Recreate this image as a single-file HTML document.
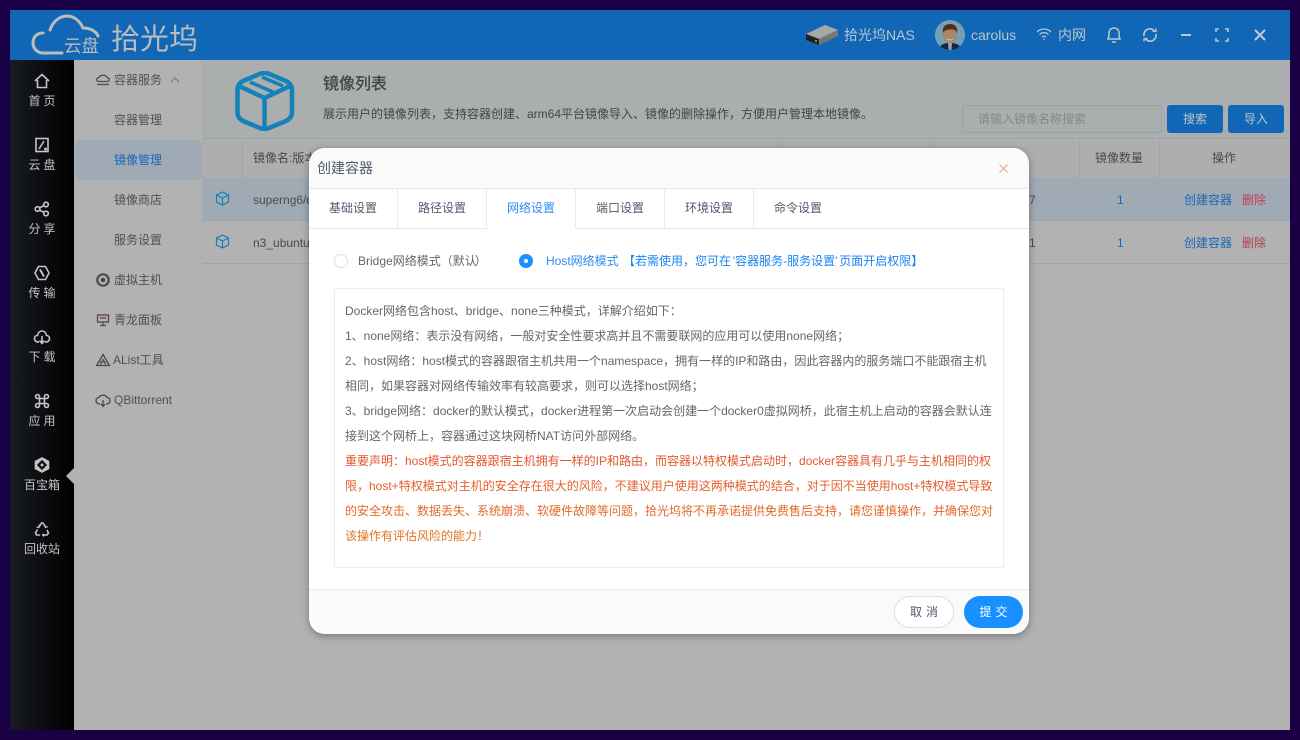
<!DOCTYPE html>
<html lang="zh">
<head>
<meta charset="utf-8">
<title>拾光坞</title>
<style>
*{box-sizing:border-box}
html,body{margin:0;padding:0;width:1300px;height:740px;overflow:hidden;background:#1a0045;font-family:"Liberation Sans","Noto Sans CJK SC",sans-serif;font-size:12px;color:#4a4a4a}
.a{position:absolute}
#top{position:absolute;left:10px;top:10px;width:1280px;height:50px;background:#1167b5}
#side{position:absolute;left:10px;top:60px;width:64px;height:670px;background:linear-gradient(90deg,#181b21,#000)}
.nav{position:absolute;left:10px;width:64px;text-align:center;color:#c4c4c4;font-size:12px;line-height:16px}
.nav svg{position:absolute;left:23px;top:-1px;width:18px;height:18px;fill:none;stroke:#c4c4c4;stroke-width:1.6}
.nav span{position:absolute;left:0;right:0;top:20px}
.nav span.s{letter-spacing:3px;padding-left:3px}
#sub{position:absolute;left:74px;top:60px;width:129px;height:670px;background:#b2b2b2;border-right:1px solid #a8acae}
.m{position:absolute;font-size:12px;color:#505050;line-height:16px;white-space:nowrap}
.m svg{position:absolute;left:-19px;top:0;width:16px;height:16px;fill:none;stroke:#4a4a4a;stroke-width:1.3}
#act{position:absolute;left:75px;top:140px;width:127px;height:40px;background:#a0aab4;border-radius:6px}
#cont{position:absolute;left:203px;top:60px;width:1087px;height:670px;background:#b2b2b2}
#hd{position:absolute;left:0;top:0;width:1087px;height:79px;background:#aaaeae;border-bottom:1px solid #9fa3a8}
#th{position:absolute;left:0;top:80px;width:1087px;height:38px;background:#aeaeae}
.v{position:absolute;top:80px;width:1px;height:38px;background:#a2a4a6}
.r{position:absolute;left:0;width:1087px;height:43px;border-bottom:1px solid #a2a5a9}
.t{position:absolute;white-space:nowrap;line-height:16px;font-size:12px}
#dlg{position:absolute;left:309px;top:148px;width:720px;height:486px;background:#fff;border-radius:16px;box-shadow:0 2px 8px rgba(0,0,0,.35);overflow:hidden}
#dh{position:absolute;left:0;top:0;width:720px;height:41px;background:#fafafa;border-bottom:1px solid #e8eaf0}
.tab{position:absolute;top:41px;height:40px;border-right:1px solid #e8eaf0;border-bottom:1px solid #e8eaf0;text-align:center;line-height:38px;font-size:12px;color:#515a6e}
.line{position:absolute;left:36px;white-space:nowrap;line-height:25px;height:25px;font-size:12px;color:#666}
#box{position:absolute;left:25px;top:140px;width:670px;height:280px;border:1px solid #ececf2}
#df{position:absolute;left:0;top:441px;width:720px;height:45px;background:#fafafa;border-top:1px solid #e8eaf0}
</style>
</head>
<body>
<div id="top"></div>
<!-- logo -->
<svg class="a" style="left:30px;top:12px" width="75" height="46" viewBox="0 0 75 46" fill="none" stroke="#bcbcbc" stroke-width="3" stroke-linecap="round">
<path d="M13 21C6 21 3 26 3 31C3 37 8 41 13 41H32"/>
<path d="M20 18C23 9 30 4 37 4C44 4 50 9 53 16C60 16 66 19 68 24"/>
</svg>
<div class="t" style="left:64px;top:36px;font-size:17.500px;line-height:20px;color:#bcbcbc">云盘</div>
<div class="t" style="left:111px;top:23px;font-size:29px;line-height:34px;color:#bcbcbc">拾光坞</div>

<!-- NAS icon -->
<svg class="a" style="left:805px;top:24px" width="34" height="22" viewBox="0 0 34 22">
<path d="M1 10L14 15L33 6L20 1Z" fill="#a8a8a8"/><path d="M1 10L14 15V21L1 16Z" fill="#222"/><path d="M14 15L33 6V12L14 21Z" fill="#777"/><rect x="10" y="16" width="2" height="2" fill="#2c2"/>
</svg>
<div class="t" style="left:844px;top:27px;font-size:14px;color:#bcc5cc">拾光坞NAS</div>
<!-- avatar -->
<svg class="a" style="left:935px;top:20px" width="30" height="30" viewBox="0 0 30 30">
<defs><clipPath id="c"><circle cx="15" cy="15" r="15"/></clipPath></defs>
<g clip-path="url(#c)"><rect width="30" height="30" fill="#74a0b4"/><path d="M3 30C5 24 10 23 15 23C20 23 25 24 27 30Z" fill="#10264a"/><path d="M13 23H17L16.500 30H13.500Z" fill="#a0a0a0"/><ellipse cx="15" cy="14" rx="7" ry="9" fill="#a88668"/><path d="M8 13C7 7 10 4 15 4C20 4 23 7 22 13C21 10 19 9 15 9.500C12 9.500 10 10 8 13Z" fill="#552b14"/><path d="M11 18C13 20 17 20 19 18C18 21 12 21 11 18Z" fill="#d8d8d8"/></g>
</svg>
<div class="t" style="left:971px;top:27px;font-size:14px;color:#bcc5cc">carolus</div>
<!-- wifi -->
<svg class="a" style="left:1036px;top:27px" width="16" height="14" viewBox="0 0 16 14" fill="none" stroke="#bcc5cc" stroke-width="1.300">
<path d="M1 5C5 1 11 1 15 5M3.500 7.500C6 5 10 5 12.500 7.500M6 10C7 9 9 9 10 10"/><circle cx="8" cy="12.300" r=".8" fill="#bcc5cc" stroke="none"/>
</svg>
<div class="t" style="left:1058px;top:27px;font-size:14px;color:#bcc5cc">内网</div>
<!-- bell -->
<svg class="a" style="left:1106px;top:26px" width="16" height="18" viewBox="0 0 16 18" fill="none" stroke="#bcc5cc" stroke-width="1.500">
<path d="M2 13C3 11 3 10 3 7C3 4 5 2 8 2C11 2 13 4 13 7C13 10 13 11 14 13Z"/><path d="M6 15.500C7 16.500 9 16.500 10 15.500"/>
</svg>
<!-- refresh -->
<svg class="a" style="left:1142px;top:27px" width="16" height="16" viewBox="0 0 16 16" fill="none" stroke="#bcc5cc" stroke-width="1.700">
<path d="M2 9A6 6 0 0 1 12.500 4"/><path d="M14 7A6 6 0 0 1 3.500 12"/><path d="M10.500 4.500H14V1.500" stroke-width="1.300"/><path d="M5.500 11.500H2V14.500" stroke-width="1.300"/>
</svg>
<!-- min -->
<div class="a" style="left:1181px;top:34px;width:10px;height:2px;background:#bcc5cc"></div>
<!-- full -->
<svg class="a" style="left:1215px;top:28px" width="14" height="14" viewBox="0 0 14 14" fill="none" stroke="#bcc5cc" stroke-width="1.600">
<path d="M1 4V1H4M10 1H13V4M13 10V13H10M4 13H1V10"/>
</svg>
<!-- close -->
<svg class="a" style="left:1254px;top:29px" width="12" height="12" viewBox="0 0 12 12" fill="none" stroke="#c4ccd2" stroke-width="2">
<path d="M1 1L11 11M11 1L1 11"/>
</svg>

<div id="side"></div>
<div class="nav" style="top:73px"><svg viewBox="0 0 18 18"><path d="M2 9L9 2.500L16 9"/><path d="M4.500 8V15.500H13.500V8"/></svg><span class="s">首页</span></div>
<div class="nav" style="top:137px"><svg viewBox="0 0 18 18"><rect x="3" y="2.500" width="12" height="13"/><path d="M11 5L6 13"/><circle cx="12.500" cy="13" r=".7" fill="#c4c4c4"/></svg><span class="s">云盘</span></div>
<div class="nav" style="top:201px"><svg viewBox="0 0 18 18"><circle cx="4.500" cy="9" r="2.300"/><circle cx="13" cy="4.500" r="2.300"/><circle cx="13" cy="13.500" r="2.300"/><path d="M6.500 8L11 5.500M6.500 10L11 12.500"/></svg><span class="s">分享</span></div>
<div class="nav" style="top:265px"><svg viewBox="0 0 18 18"><path d="M5.500 2.500H12.500L16 9L12.500 15.500H5.500L2 9Z"/><path d="M7 5.500L11 12.500" stroke-width="2"/></svg><span class="s">传输</span></div>
<div class="nav" style="top:329px"><svg viewBox="0 0 18 18"><path d="M6 14H5C2.500 14 1.500 12 1.500 10.500C1.500 8.500 3 7.500 4.500 7.500C5 4.500 7 3 9 3C11 3 13 4.500 13.500 7.500C15 7.500 16.500 8.500 16.500 10.500C16.500 12 15.500 14 13 14H12"/><path d="M9 8V15M6.500 12.500L9 15.500L11.500 12.500"/></svg><span class="s">下载</span></div>
<div class="nav" style="top:393px"><svg viewBox="0 0 18 18"><rect x="6.500" y="6.500" width="5" height="5"/><path d="M6.500 6.500H4.500A2 2 0 1 1 6.500 4.500ZM11.500 6.500V4.500A2 2 0 1 1 13.500 6.500ZM11.500 11.500H13.500A2 2 0 1 1 11.500 13.500ZM6.500 11.500V13.500A2 2 0 1 1 4.500 11.500Z"/></svg><span class="s">应用</span></div>
<div class="nav" style="top:457px"><svg viewBox="0 0 18 18"><path d="M9 2L15.500 5.500V12.500L9 16L2.500 12.500V5.500Z" fill="#c4c4c4"/><path d="M9 5L13 9L9 13L5 9Z" stroke="#111" fill="#111"/><circle cx="9" cy="9" r="1.500" fill="#c4c4c4" stroke="none"/></svg><span>百宝箱</span></div>
<div class="nav" style="top:521px"><svg viewBox="0 0 18 18"><path d="M6 7L8.500 3H10L12.500 7M14 10L15.500 13L14 15H10.500M7 15H3.500L2.500 13L4.500 9.500"/><path d="M11 14L9.500 15L11 16.500M6.500 4.500L6 7.500L3.500 7M15 6.500L12.500 7.500L12 5" stroke-width="1.200"/></svg><span>回收站</span></div>

<div id="sub"></div>
<div id="act"></div>
<div class="m" style="left:114px;top:72px"><svg viewBox="0 0 16 16"><path d="M4 9.500C1 9.500 1 5.500 4 5.500C5 2.500 11 2.500 12 5.500C15 5.500 15 9.500 12 9.500Z"/><path d="M2 12.500H14"/></svg>容器服务<svg style="left:53px;top:0" viewBox="0 0 16 16"><path d="M4 10L8 6L12 10" stroke="#777" stroke-width="1"/></svg></div>
<div class="m" style="left:114px;top:112px">容器管理</div>
<div class="m" style="left:114px;top:152px;color:#1a66bd">镜像管理</div>
<div class="m" style="left:114px;top:192px">镜像商店</div>
<div class="m" style="left:114px;top:232px">服务设置</div>
<div class="m" style="left:114px;top:272px"><svg viewBox="0 0 16 16"><circle cx="8" cy="8" r="5.700" stroke-width="2.200"/><circle cx="8" cy="8" r="2.300" fill="#4a4a4a" stroke="none"/></svg>虚拟主机</div>
<div class="m" style="left:114px;top:312px"><svg viewBox="0 0 16 16"><rect x="2.500" y="3" width="11" height="7"/><path d="M8 10V13.500M5 13.500H11"/><path d="M5 6H11" stroke="#8a3030"/></svg>青龙面板</div>
<div class="m" style="left:113px;top:352px"><svg style="left:-18px" viewBox="0 0 16 16"><path d="M8 2.500L14.500 13.500H1.500Z"/><path d="M8 7L5 13.500M8 7L11 13.500M4.500 10H11.500" stroke-width="1"/></svg>AList工具</div>
<div class="m" style="left:114px;top:392px"><svg viewBox="0 0 16 16"><path d="M5 12C2 12 1 10 1 8.500C1 6.500 2.500 5.500 4 5.500C5 2.500 11 2.500 12 5.500C14 5.500 15 7 15 8.500C15 10.500 14 12 11 12"/><path d="M8 8V14M6 12L8 14.500L10 12"/></svg>QBittorrent</div>
<!-- pointer -->
<div class="a" style="left:66px;top:468px;width:0;height:0;border-top:8px solid transparent;border-bottom:8px solid transparent;border-right:8px solid #b2b2b2"></div>

<div id="cont">
  <div id="hd"></div>
  <svg class="a" style="left:32px;top:11px" width="60" height="60" viewBox="0 0 60 60" fill="none" stroke="#1481b8" stroke-width="4.500" stroke-linejoin="round">
    <path d="M24.500 3Q29.500 1 34.500 3L51 10Q57 13 57 19V41Q57 47 51 50L34 57Q29.500 59 25 57L8 50Q2.500 47 2.500 41V19Q2.500 13 8 10Z"/>
    <path d="M4 15L29.500 27L55 15M29.500 27V57"/>
    <path d="M15 11L38 21M27 6L48 15" stroke-width="3.500"/>
  </svg>
  <div class="t" style="left:120px;top:15px;font-size:16px;line-height:20px;color:#3e4242;-webkit-text-stroke:.3px #3e4242">镜像列表</div>
  <div class="t" style="left:120px;top:46px;font-size:12px;color:#444">展示用户的镜像列表，支持容器创建、arm64平台镜像导入、镜像的删除操作，方便用户管理本地镜像。</div>
  <div class="a" style="left:759px;top:45px;width:200px;height:28px;border:1px solid #9ea2a4;border-radius:3px;background:#aaaeae"></div>
  <div class="t" style="left:775px;top:51px;color:#858889">请输入镜像名称搜索</div>
  <div class="a" style="left:964px;top:45px;width:56px;height:28px;background:#1167b5;border-radius:3px;color:#bcc5cc;text-align:center;line-height:28px">搜索</div>
  <div class="a" style="left:1025px;top:45px;width:56px;height:28px;background:#1167b5;border-radius:3px;color:#bcc5cc;text-align:center;line-height:28px">导入</div>

  <div id="th"></div>
  <div class="v" style="left:39px"></div>
  <div class="v" style="left:576px"></div>
  <div class="v" style="left:726px"></div>
  <div class="v" style="left:876px"></div>
  <div class="v" style="left:956px"></div>
  <div class="t" style="left:50px;top:90px;color:#4a4a4a">镜像名:版本</div>
  <div class="t" style="left:892px;top:90px;color:#4a4a4a">镜像数量</div>
  <div class="t" style="left:1009px;top:90px;color:#4a4a4a">操作</div>

  <div class="r" style="top:118px;background:#a0aab4"></div>
  <div class="r" style="top:161px"></div>
  <svg class="a" style="left:12px;top:131px" width="15" height="15" viewBox="0 0 15 15" fill="none" stroke="#1481b8" stroke-width="1.200"><path d="M7.500 1L13.500 4V11L7.500 14L1.500 11V4Z"/><path d="M1.500 4L7.500 7L13.500 4M7.500 7V14"/></svg>
  <svg class="a" style="left:12px;top:174px" width="15" height="15" viewBox="0 0 15 15" fill="none" stroke="#1481b8" stroke-width="1.200"><path d="M7.500 1L13.500 4V11L7.500 14L1.500 11V4Z"/><path d="M1.500 4L7.500 7L13.500 4M7.500 7V14"/></svg>
  <div class="t" style="left:50px;top:132px;color:#4a4a4a">superng6/qbittorrent</div>
  <div class="t" style="left:50px;top:175px;color:#4a4a4a">n3_ubuntu</div>
  <div class="t" style="left:826px;top:132px;color:#4a4a4a">7</div>
  <div class="t" style="left:826px;top:175px;color:#4a4a4a">1</div>
  <div class="t" style="left:914px;top:132px;color:#1a68b8">1</div>
  <div class="t" style="left:914px;top:175px;color:#1a68b8">1</div>
  <div class="t" style="left:981px;top:132px;color:#1a68b8">创建容器</div>
  <div class="t" style="left:1039px;top:132px;color:#c04050">删除</div>
  <div class="t" style="left:981px;top:175px;color:#1a68b8">创建容器</div>
  <div class="t" style="left:1039px;top:175px;color:#b04050">删除</div>
</div>

<div id="dlg">
  <div id="dh"></div>
  <div class="t" style="left:8px;top:12px;font-size:14px;color:#515a6e">创建容器</div>
  <svg class="a" style="left:690px;top:16px" width="9" height="9" viewBox="0 0 9 9" fill="none" stroke="#d9a98c" stroke-width="1"><path d="M.5 .5L8.500 8.500M8.500 .5L.5 8.500"/></svg>

  <div class="tab" style="left:0;width:89px">基础设置</div>
  <div class="tab" style="left:89px;width:89px">路径设置</div>
  <div class="tab" style="left:178px;width:89px;color:#2d8cf0;border-bottom:1px solid #fff">网络设置</div>
  <div class="tab" style="left:267px;width:89px">端口设置</div>
  <div class="tab" style="left:356px;width:89px">环境设置</div>
  <div class="tab" style="left:445px;width:275px;border-right:0;text-align:left;padding-left:20px">命令设置</div>
  <div class="a" style="left:177px;top:41px;width:1px;height:40px;background:#e8eaf0"></div>

  <div class="a" style="left:25px;top:106px;width:14px;height:14px;border:1px solid #dcdee2;border-radius:50%"></div>
  <div class="t" style="left:49px;top:105px;color:#666">Bridge网络模式（默认<span style="margin-left:-2px">）</span></div>
  <div class="a" style="left:210px;top:106px;width:14px;height:14px;border-radius:50%;background:#1890ff"></div>
  <div class="a" style="left:215px;top:111px;width:4px;height:4px;border-radius:50%;background:#fff"></div>
  <div class="t" style="left:237px;top:105px;color:#2d8cf0">Host网络模式 <b style="color:#1a84f5;font-weight:400;margin-left:1px;word-spacing:-1.500px">【若需使用，您可在 '容器服务-服务设置' 页面开启权限】</b></div>

  <div id="box"></div>
  <div class="line" style="top:151px">Docker网络包含host、bridge、none三种模式，详解介绍如下：</div>
  <div class="line" style="top:176px">1、none网络：表示没有网络，一般对安全性要求高并且不需要联网的应用可以使用none网络；</div>
  <div class="line" style="top:201px">2、host网络：host模式的容器跟宿主机共用一个namespace，拥有一样的IP和路由，因此容器内的服务端口不能跟宿主机</div>
  <div class="line" style="top:226px">相同，如果容器对网络传输效率有较高要求，则可以选择host网络；</div>
  <div class="line" style="top:251px">3、bridge网络：docker的默认模式，docker进程第一次启动会创建一个docker0虚拟网桥，此宿主机上启动的容器会默认连</div>
  <div class="line" style="top:276px">接到这个网桥上，容器通过这块网桥NAT访问外部网络。</div>
  <div class="line" style="top:301px;color:#e2572d">重要声明：host模式的容器跟宿主机拥有一样的IP和路由，而容器以特权模式启动时，docker容器具有几乎与主机相同的权</div>
  <div class="line" style="top:326px;color:#e35f2c">限，host+特权模式对主机的安全存在很大的风险，不建议用户使用这两种模式的结合，对于因不当使用host+特权模式导致</div>
  <div class="line" style="top:351px;color:#e36a28">的安全攻击、数据丢失、系统崩溃、软硬件故障等问题，拾光坞将不再承诺提供免费售后支持，请您谨慎操作，并确保您对</div>
  <div class="line" style="top:376px;color:#e27422">该操作有评估风险的能力！</div>

  <div id="df"></div>
  <div class="a" style="left:585px;top:448px;width:60px;height:32px;border:1px solid #dcdee2;border-radius:16px;background:#fff;text-align:center;line-height:30px;color:#515a6e;letter-spacing:4px;padding-left:4px">取消</div>
  <div class="a" style="left:655px;top:448px;width:59px;height:32px;border-radius:16px;background:#1890ff;text-align:center;line-height:32px;color:#fff;letter-spacing:4px;padding-left:4px">提交</div>
</div>
</body>
</html>
